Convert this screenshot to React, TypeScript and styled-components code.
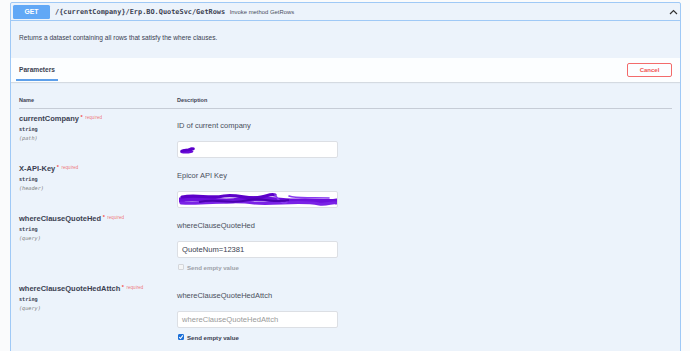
import React from 'react';
import styled, {createGlobalStyle} from 'styled-components';

type Param = {
    name: string;
    type: string;
    location: string;
    description: string;
    value?: string;
    placeholder?: string;
    redact?: 'short' | 'long';
    emptyValue?: 'disabled' | 'checked';
};

const params: Param[] = [
    {name: 'currentCompany', type: 'string', location: '(path)', description: 'ID of current company', redact: 'short'},
    {name: 'X-API-Key', type: 'string', location: '(header)', description: 'Epicor API Key', redact: 'long'},
    {
        name: 'whereClauseQuoteHed', type: 'string', location: '(query)', description: 'whereClauseQuoteHed',
        value: 'QuoteNum=12381', emptyValue: 'disabled'
    },
    {
        name: 'whereClauseQuoteHedAttch', type: 'string', location: '(query)', description: 'whereClauseQuoteHedAttch',
        placeholder: 'whereClauseQuoteHedAttch', emptyValue: 'checked'
    },
];

function ShortScribble() {
    return (
        <svg width="17" height="10" viewBox="0 0 17 10">
            <path d="M1 7 C3 4, 6 3, 9 4 C11 2, 14 2, 16 3 L13 5.5 C15 6, 15 7.5, 12 8 C8 9, 4 8.5, 2 8 Z" fill="#6a0bd8"/>
            <path d="M2.5 6 L14.5 4" stroke="#5a00c8" strokeWidth="2.4" strokeLinecap="round"/>
        </svg>
    );
}

function LongScribble() {
    return (
        <svg width="159" height="15" viewBox="0 0 159 15">
            <path d="M1 8 C20 4, 40 12, 60 8 C80 4, 100 10, 120 9 C135 8, 148 11, 158 9"
                  stroke="#6d10dc" strokeWidth="5" fill="none" strokeLinecap="round"/>
            <path d="M2 11 C25 13, 50 7, 75 11 C95 13, 120 8, 140 12 C148 13, 154 10, 157 11"
                  stroke="#7a22e6" strokeWidth="3" fill="none" strokeLinecap="round"/>
            <path d="M3 5 C18 2, 30 7, 45 4 C60 2, 70 8, 82 5 C88 4, 92 1.5, 96 3"
                  stroke="#5c00c9" strokeWidth="3.2" fill="none" strokeLinecap="round"/>
            <path d="M96 3 C100 9, 104 13, 108 10 M110 4 C118 7, 130 5, 150 6"
                  stroke="#8a3cf0" strokeWidth="1.6" fill="none" strokeLinecap="round"/>
            <path d="M20 10 C40 6, 50 13, 70 8 C85 5, 95 12, 110 8"
                  stroke="#4b00b0" strokeWidth="2" fill="none"/>
        </svg>
    );
}

export default function App() {
    return (
        <Page>
            <GlobalStyle/>
            <Opblock>
                <Summary>
                    <Method>GET</Method>
                    <Path>/{'{'}currentCompany{'}'}/Erp.BO.QuoteSvc/GetRows</Path>
                    <SummaryText>Invoke method GetRows</SummaryText>
                    <Chevron>
                        <svg width="9" height="6" viewBox="0 0 9 6">
                            <polyline points="1,5 4.5,1.5 8,5" fill="none" stroke="#333" strokeWidth="1.2"/>
                        </svg>
                    </Chevron>
                </Summary>
                <Description>Returns a dataset containing all rows that satisfy the where clauses.</Description>
                <SectionHeader>
                    <Tab>Parameters</Tab>
                    <CancelButton>Cancel</CancelButton>
                </SectionHeader>
                <Table>
                    <HeadRow>
                        <HeadCell>Name</HeadCell>
                        <HeadCell>Description</HeadCell>
                    </HeadRow>
                    {params.map((p) => (
                        <Row key={p.name}>
                            <NameCell>
                                <ParamName>
                                    {p.name}
                                    <Star>&nbsp;*</Star>
                                    <Required>required</Required>
                                </ParamName>
                                <ParamType>{p.type}</ParamType>
                                <ParamIn>{p.location}</ParamIn>
                            </NameCell>
                            <DescCell>
                                <DescText>{p.description}</DescText>
                                <InputBox $placeholder={!!p.placeholder}>
                                    {p.redact === 'short' && <ShortScribble/>}
                                    {p.redact === 'long' && <LongScribble/>}
                                    {p.value || p.placeholder}
                                </InputBox>
                                {p.emptyValue && (
                                    <EmptyValue $checked={p.emptyValue === 'checked'}>
                                        <CheckBox $checked={p.emptyValue === 'checked'}>
                                            {p.emptyValue === 'checked' && (
                                                <svg width="6" height="6" viewBox="0 0 6 6">
                                                    <polyline points="1.2,3.2 2.5,4.5 4.9,1.4" fill="none"
                                                              stroke="#fff" strokeWidth="1.1"/>
                                                </svg>
                                            )}
                                        </CheckBox>
                                        Send empty value
                                    </EmptyValue>
                                )}
                            </DescCell>
                        </Row>
                    ))}
                </Table>
            </Opblock>
        </Page>
    );
}

const GlobalStyle = createGlobalStyle`
  html, body {
    margin: 0;
    overflow: hidden;
    background: #fafbfc;
    font-family: "Liberation Sans", Arial, sans-serif;
    color: #3b4151;
  }
`;

const Page = styled.div`
  padding: 2px 9px 0 10px;
  height: 351px;
  box-sizing: border-box;
`;

const Opblock = styled.div`
  border: 1px solid #9fc9f6;
  border-radius: 2px;
  background: #ecf3fb;
  height: 360px;
  overflow: hidden;
`;

const Summary = styled.div`
  display: flex;
  align-items: center;
  height: 17px;
  padding: 0 2px;
  border-bottom: 1px solid #9fc9f6;
`;

const Method = styled.div`
  width: 37px;
  height: 14px;
  border-radius: 1.5px;
  background: #61a8f6;
  color: #fff;
  font-weight: 700;
  font-size: 6.8px;
  display: flex;
  align-items: center;
  justify-content: center;
`;

const Path = styled.span`
  margin-left: 5px;
  font-family: "DejaVu Sans Mono", "Liberation Mono", monospace;
  font-weight: 700;
  font-size: 6.9px;
  color: #3b4151;
`;

const SummaryText = styled.span`
  margin-left: 4.5px;
  font-size: 5.9px;
  color: #4a4f5c;
`;

const Chevron = styled.div`
  margin-left: auto;
  display: flex;
`;

const Description = styled.div`
  padding: 13px 8px 16px;
  font-size: 6.6px;
  line-height: 8px;
  color: #3b4151;
`;

const SectionHeader = styled.div`
  display: flex;
  align-items: center;
  height: 24px;
  padding: 0 8px 0 5px;
  background: rgba(255, 255, 255, 0.85);
  box-shadow: 0 1px 1px rgba(0, 0, 0, 0.1);
`;

const Tab = styled.div`
  align-self: flex-start;
  padding: 8px 3px 5px;
  border-bottom: 2px solid #5d9fea;
  font-size: 6.6px;
  line-height: 8px;
  font-weight: 700;
  color: #3b4151;
`;

const CancelButton = styled.div`
  margin-left: auto;
  width: 45px;
  height: 14px;
  box-sizing: border-box;
  border: 1.5px solid #f36b6b;
  border-radius: 2px;
  display: flex;
  align-items: center;
  justify-content: center;
  color: #f15454;
  font-weight: 700;
  font-size: 6px;
`;

const Table = styled.div`
  padding: 0 8px;
`;

const HeadRow = styled.div`
  display: grid;
  grid-template-columns: 158px 1fr;
  padding: 14px 0 4px;
  border-bottom: 1px solid #c6ccd6;
`;

const HeadCell = styled.div`
  font-size: 5.5px;
  line-height: 8px;
  font-weight: 700;
  color: #3b4151;
`;

const Row = styled.div`
  display: grid;
  grid-template-columns: 158px 1fr;
  padding: 4px 0 1px;
`;

const NameCell = styled.div`
  display: flex;
  flex-direction: column;
`;

const ParamName = styled.div`
  font-size: 7.5px;
  line-height: 11px;
  font-weight: 700;
  color: #3b4151;
  white-space: nowrap;
`;

const Star = styled.span`
  color: #f24a4a;
  font-size: 5.5px;
  position: relative;
  top: -2px;
`;

const Required = styled.span`
  color: rgba(240, 40, 40, 0.65);
  font-size: 4.6px;
  font-weight: 400;
  position: relative;
  top: -2.5px;
  margin-left: 2.5px;
`;

const ParamType = styled.div`
  font-family: "DejaVu Sans Mono", "Liberation Mono", monospace;
  font-weight: 700;
  font-size: 5.2px;
  line-height: 9px;
  color: #3b4151;
`;

const ParamIn = styled.div`
  font-family: "DejaVu Sans Mono", "Liberation Mono", monospace;
  font-style: italic;
  font-size: 5.2px;
  line-height: 9px;
  color: #808080;
`;

const DescCell = styled.div`
  display: flex;
  flex-direction: column;
  align-items: flex-start;
  padding-top: 8px;
`;

const DescText = styled.div`
  font-size: 7.5px;
  line-height: 10px;
  color: #4a4f5c;
`;

const InputBox = styled.div<{ $placeholder: boolean }>`
  margin-top: 10px;
  width: 161px;
  height: 17px;
  box-sizing: border-box;
  border: 1px solid #dcdfe4;
  border-radius: 2px;
  background: #fff;
  display: flex;
  align-items: center;
  padding-left: 4px;
  overflow: hidden;
  font-size: 7.6px;
  color: ${(p) => (p.$placeholder ? '#9a9a9a' : '#3b4151')};

  svg {
    margin-left: -3px;
    flex-shrink: 0;
  }
`;

const EmptyValue = styled.div<{ $checked: boolean }>`
  display: flex;
  align-items: center;
  margin: 4px 0 6px 1px;
  height: 10px;
  font-size: 6.1px;
  font-weight: 700;
  color: ${(p) => (p.$checked ? '#3b4151' : '#9da1a8')};
`;

const CheckBox = styled.span<{ $checked: boolean }>`
  width: 6px;
  height: 6px;
  box-sizing: border-box;
  margin-right: 3px;
  border-radius: 1px;
  display: flex;
  align-items: center;
  justify-content: center;
  border: 1px solid ${(p) => (p.$checked ? '#1b6fd8' : '#d4d6da')};
  background: ${(p) => (p.$checked ? '#1b6fd8' : '#f4f5f6')};

  svg {
    flex-shrink: 0;
  }
`;
